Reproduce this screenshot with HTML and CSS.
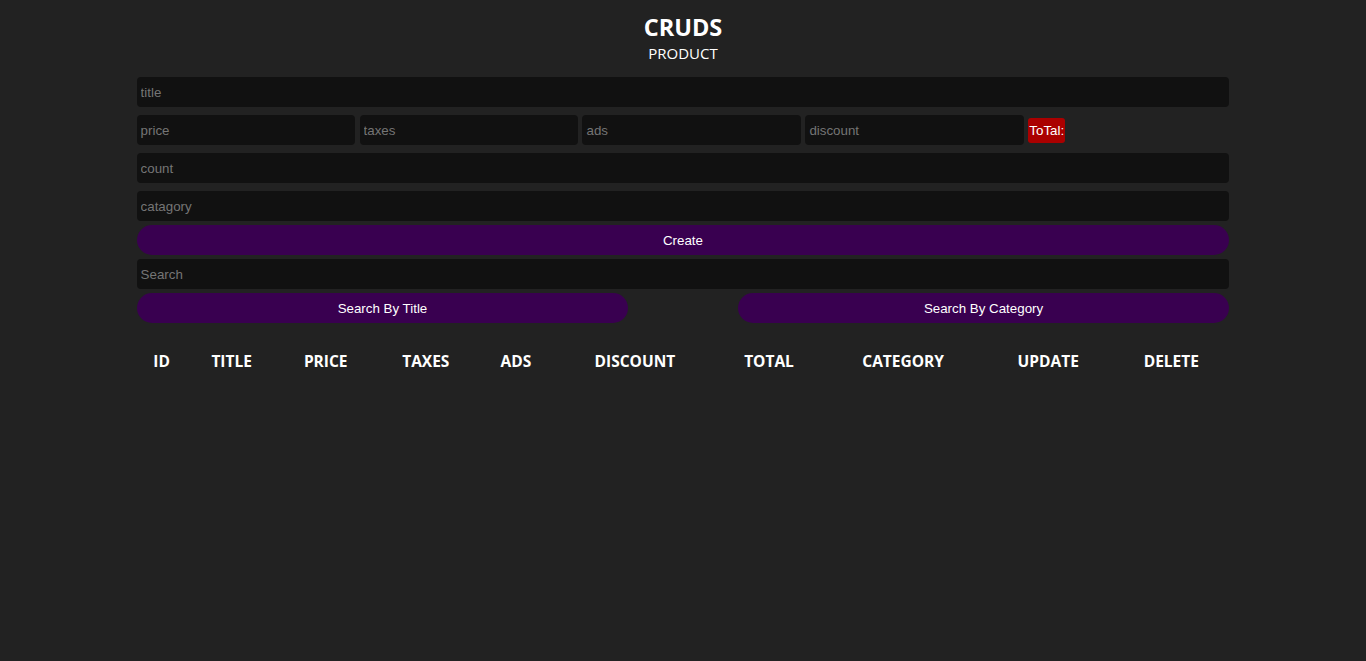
FILE: index.html
```html
<!DOCTYPE html>
<html>
<head>
<meta charset="utf-8">
<title>CRUDS</title>
<link rel="stylesheet" href="styles.css">
</head>
<body>
<div class="crud">
  <div class="head">
    <h2>CRUDS</h2>
    <p>PRODUCT</p>
  </div>
  <div class="inputs">
    <input type="text" class="field" placeholder="title">
    <div class="price">
      <input type="number" class="small" placeholder="price">
      <input type="number" class="small" placeholder="taxes">
      <input type="number" class="small" placeholder="ads">
      <input type="number" class="small" placeholder="discount">
      <small class="total">ToTal:</small>
    </div>
    <input type="number" class="field" placeholder="count">
    <input type="text" class="field" placeholder="catagory">
    <button class="btn create">Create</button>
  </div>
  <div class="search-block">
    <input type="text" class="field search" placeholder="Search">
    <div class="btn-search">
      <button class="btn half">Search By Title</button>
      <button class="btn half">Search By Category</button>
    </div>
  </div>
  <div class="outputs">
    <table>
      <tr>
        <th class="c-id">ID</th>
        <th class="c-title">TITLE</th>
        <th class="c-price">PRICE</th>
        <th class="c-taxes">TAXES</th>
        <th class="c-ads">ADS</th>
        <th class="c-discount">DISCOUNT</th>
        <th class="c-total">TOTAL</th>
        <th class="c-category">CATEGORY</th>
        <th class="c-update">UPDATE</th>
        <th class="c-delete">DELETE</th>
      </tr>
    </table>
  </div>
</div>
</body>
</html>
```

FILE: styles.css
```css
* { box-sizing: border-box; }

body {
  margin: 0;
  background: #222;
  color: #fff;
  font-family: "Open Sans", "Noto Sans", sans-serif;
}

.crud {
  width: 80%;
  margin: 0 auto;
}

.head {
  text-align: center;
  padding-top: 12px;
}

.head h2 {
  margin: 0;
  font-size: 23.5px;
  font-weight: 700;
  line-height: 30px;
}

.head p {
  margin: 1px 0 0;
  font-size: 15px;
  line-height: 20px;
}

.inputs {
  display: flex;
  flex-direction: column;
  margin-top: 10px;
}

input {
  background: #111;
  border: none;
  outline: none;
  border-radius: 4px;
  height: 30px;
  padding: 4px;
  color: #fff;
  font-family: "Liberation Sans", Arial, sans-serif;
  font-size: 13.33px;
}

input::placeholder { color: #757575; }

.field {
  width: 100%;
  margin: 4px 0;
}

.price {
  display: flex;
  align-items: center;
  gap: 4.4px;
  margin: 4px 0;
}

.price .small {
  width: 20%;
}

.total {
  background: #a00;
  color: #fff;
  font-family: "Liberation Sans", Arial, sans-serif;
  font-size: 13.33px;
  padding: 4px 1px;
  border-radius: 3px;
  line-height: 17px;
}

.btn {
  height: 30px;
  border: none;
  border-radius: 20px;
  background: #390050;
  color: #fff;
  font-family: "Liberation Sans", Arial, sans-serif;
  font-size: 13.33px;
  cursor: pointer;
}

.create {
  width: 100%;
  margin-top: 0;
}

.search-block {
  display: flex;
  flex-direction: column;
  margin-top: 4px;
}

.search {
  margin: 0;
}

.btn-search {
  display: flex;
  justify-content: space-between;
  margin-top: 4px;
}

.half { width: 45%; }

.outputs {
  margin-top: 23px;
}

table {
  width: 100%;
  border-collapse: collapse;
  table-layout: fixed;
}

th {
  font-size: 15.5px;
  font-weight: 700;
  text-transform: uppercase;
  padding: 0;
  height: 30px;
  text-align: center;
}

.c-id { width: 50px; }
.c-title { width: 90px; }
.c-price { width: 98px; }
.c-taxes { width: 102px; }
.c-ads { width: 78px; }
.c-discount { width: 160px; }
.c-total { width: 108px; }
.c-category { width: 160px; }
.c-update { width: 130px; }
.c-delete { width: 116px; }
```
